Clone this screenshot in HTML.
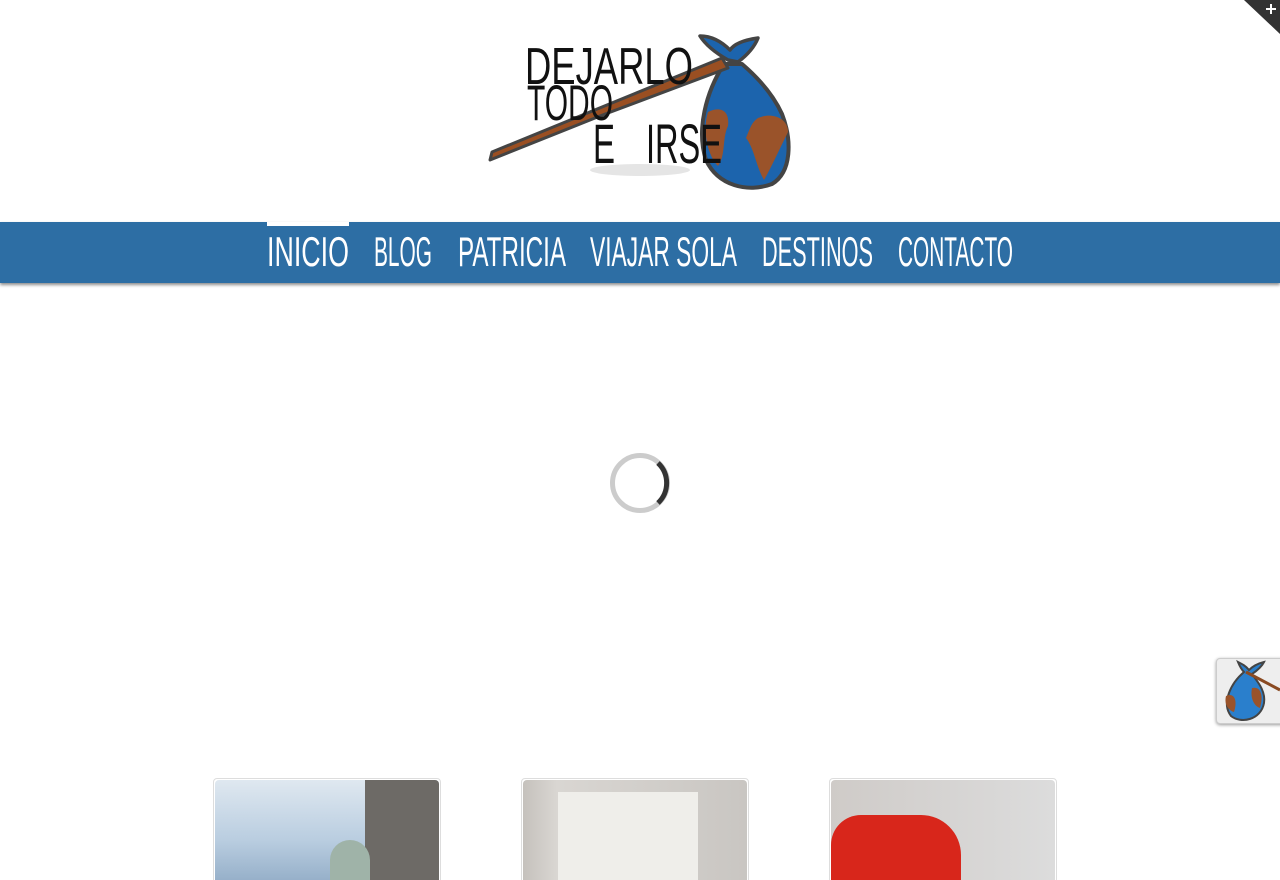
<!DOCTYPE html>
<html><head><meta charset="utf-8"><style>
html,body{margin:0;padding:0;background:#fff;width:1280px;height:880px;overflow:hidden;position:relative;font-family:"Liberation Sans",sans-serif}
.nav{position:absolute;left:0;top:222px;width:1280px;height:61px;background:#2d6ea4;box-shadow:0 2px 3px rgba(0,0,0,.45)}
.act{position:absolute;left:267px;top:222px;width:82px;height:4px;background:#fff}
.thumb{position:absolute;top:778px;width:224px;height:110px;border:1px solid #ddd;border-radius:4px;overflow:hidden;padding:1px}
.thumb>div{width:100%;height:100%;border-radius:4px;position:relative;overflow:hidden}
</style></head><body>
<svg width="1280" height="220" style="position:absolute;left:0;top:0">
  <ellipse cx="640" cy="170" rx="50" ry="6" fill="#000" opacity=".10"/>
  <path d="M724 64 C706 92 696 130 706 160 C718 186 748 193 772 184 C792 172 792 140 782 114 C772 92 756 76 742 64 Z" fill="#1c64ad" stroke="#444" stroke-width="4" stroke-linejoin="round"/>
  <path d="M728 60 C714 52 705 44 700 36 C712 36 722 42 730 50 C734 44 744 40 758 38 C754 48 746 56 738 62 Z" fill="#1c64ad" stroke="#444" stroke-width="3.5" stroke-linejoin="round"/>
  <path d="M708 112 C720 106 730 110 728 126 C722 138 726 155 718 166 C708 156 702 132 708 112Z M758 118 C772 112 788 118 788 132 C780 148 772 166 764 180 C756 166 754 148 746 138 C750 128 752 122 758 118Z" fill="#9a532a"/>
  <path d="M490 160 L492 152 L722 58 L728 68 L600 116 Z" fill="#9a4f22" stroke="#444" stroke-width="3" stroke-linejoin="round"/>
  <g font-family="Liberation Sans Narrow, Liberation Sans, sans-serif" fill="#111">
    <text x="525" y="84" font-size="52" textLength="168" lengthAdjust="spacingAndGlyphs">DEJARLO</text>
    <text x="527" y="120" font-size="50" textLength="86" lengthAdjust="spacingAndGlyphs">TODO</text>
    <text x="593" y="163" font-size="56" textLength="22" lengthAdjust="spacingAndGlyphs">E</text>
    <text x="646" y="163" font-size="56" textLength="76" lengthAdjust="spacingAndGlyphs">IRSE</text>
  </g>
</svg>
<svg width="36" height="36" style="position:absolute;left:1244px;top:0"><path d="M0 0H36V34Z" fill="#333"/><path d="M27 4V14M22 9H32" stroke="#fff" stroke-width="2"/></svg>
<div class="nav"></div><div class="act"></div>
<svg width="1280" height="61" style="position:absolute;left:0;top:222px">
  <g font-family="Liberation Sans Narrow, Liberation Sans, sans-serif" fill="#fff" font-size="42">
    <text x="267" y="44" textLength="82" lengthAdjust="spacingAndGlyphs">INICIO</text>
    <text x="374" y="44" textLength="58" lengthAdjust="spacingAndGlyphs">BLOG</text>
    <text x="458" y="44" textLength="108" lengthAdjust="spacingAndGlyphs">PATRICIA</text>
    <text x="590" y="44" textLength="147" lengthAdjust="spacingAndGlyphs">VIAJAR SOLA</text>
    <text x="762" y="44" textLength="111" lengthAdjust="spacingAndGlyphs">DESTINOS</text>
    <text x="898" y="44" textLength="115" lengthAdjust="spacingAndGlyphs">CONTACTO</text>
  </g>
</svg>
<svg width="64" height="64" style="position:absolute;left:608px;top:451px">
  <circle cx="32" cy="32" r="27.5" fill="none" stroke="#ccc" stroke-width="5"/>
  <path d="M50 12 A27.5 27.5 0 0 1 50 52" fill="none" stroke="#333" stroke-width="5"/>
</svg>
<div style="position:absolute;left:1216px;top:658px;width:70px;height:64px;background:#eee;border:1px solid #ccc;border-radius:4px;box-shadow:0 1px 3px rgba(0,0,0,.4)"></div>
<svg width="64" height="64" style="position:absolute;left:1216px;top:658px">
  <path d="M28 14 C15 25 5 45 15 58 C25 66 45 62 48 45 C50 32 40 22 36 16 C42 12 46 8 48 4 C40 6 36 9 33 12 C30 8 26 6 22 4 C24 9 26 12 28 14Z" fill="#2a7fcc" stroke="#444" stroke-width="2"/>
  <path d="M10 38 C18 34 22 42 18 54 C12 52 8 46 10 38Z M36 30 C44 28 48 36 44 50 C38 48 34 40 36 30Z" fill="#9a532a"/>
  <path d="M30 14 L64 32" stroke="#8a4a22" stroke-width="3"/>
</svg>
<div class="thumb" style="left:213px"><div style="background:linear-gradient(180deg,#dfe8f0 0%,#b9cde0 55%,#8ea9c4 100%)">
  <div style="position:absolute;left:150px;top:0;width:80px;height:110px;background:#6d6a66"></div>
  <div style="position:absolute;left:115px;top:60px;width:40px;height:50px;background:#9fb3a8;border-radius:20px 20px 0 0"></div>
</div></div>
<div class="thumb" style="left:521px"><div style="background:linear-gradient(90deg,#c5c1bc 0%,#d9d6d2 15%,#c9c6c2 100%)">
  <div style="position:absolute;left:35px;top:12px;width:140px;height:100px;background:#efeeea"></div>
</div></div>
<div class="thumb" style="left:829px"><div style="background:linear-gradient(90deg,#cfcbc8 0%,#dcdcdc 100%)">
  <div style="position:absolute;left:0;top:35px;width:130px;height:80px;background:#d8261b;border-radius:30px 40px 0 0"></div>
</div></div>
</body></html>
